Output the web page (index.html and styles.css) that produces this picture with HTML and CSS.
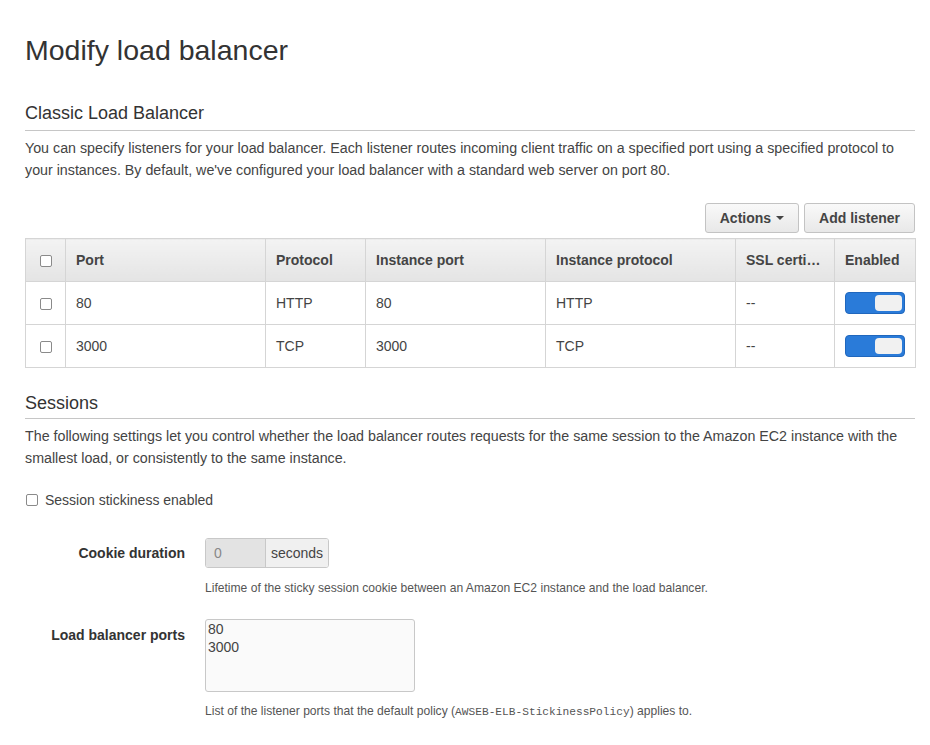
FILE: index.html
```html
<!DOCTYPE html>
<html>
<head>
<meta charset="utf-8">
<link rel="stylesheet" href="styles.css">
</head>
<body>
<div class="page">
  <h1 class="title">Modify load balancer</h1>

  <h2 class="section-title">Classic Load Balancer</h2>
  <p class="desc">You can specify listeners for your load balancer. Each listener routes incoming client traffic on a specified port using a specified protocol to your instances. By default, we've configured your load balancer with a standard web server on port 80.</p>

  <div class="toolbar">
    <button class="btn">Actions <span class="caret"></span></button>
    <button class="btn">Add listener</button>
  </div>

  <table class="grid">
    <colgroup>
      <col class="c-check"><col class="c-port"><col class="c-proto"><col class="c-iport"><col class="c-iproto"><col class="c-ssl"><col class="c-en">
    </colgroup>
    <thead>
      <tr>
        <th class="chk"><span class="cb"></span></th>
        <th>Port</th>
        <th>Protocol</th>
        <th>Instance port</th>
        <th>Instance protocol</th>
        <th>SSL certi…</th>
        <th>Enabled</th>
      </tr>
    </thead>
    <tbody>
      <tr>
        <td class="chk"><span class="cb"></span></td>
        <td>80</td>
        <td>HTTP</td>
        <td>80</td>
        <td>HTTP</td>
        <td>--</td>
        <td><span class="toggle"><span class="knob"></span></span></td>
      </tr>
      <tr>
        <td class="chk"><span class="cb"></span></td>
        <td>3000</td>
        <td>TCP</td>
        <td>3000</td>
        <td>TCP</td>
        <td>--</td>
        <td><span class="toggle"><span class="knob"></span></span></td>
      </tr>
    </tbody>
  </table>

  <h2 class="section-title sessions">Sessions</h2>
  <p class="desc">The following settings let you control whether the load balancer routes requests for the same session to the Amazon EC2 instance with the smallest load, or consistently to the same instance.</p>

  <label class="check-line"><span class="cb"></span>Session stickiness enabled</label>

  <div class="form-row cookie-row">
    <div class="label">Cookie duration</div>
    <div class="field">
      <div class="input-group">
        <span class="input">0</span><span class="addon">seconds</span>
      </div>
      <div class="help">Lifetime of the sticky session cookie between an Amazon EC2 instance and the load balancer.</div>
    </div>
  </div>

  <div class="form-row ports-row">
    <div class="label">Load balancer ports</div>
    <div class="field">
      <div class="textarea">80<br>3000</div>
      <div class="help">List of the listener ports that the default policy (<code>AWSEB-ELB-StickinessPolicy</code>) applies to.</div>
    </div>
  </div>
</div>
</body>
</html>
```

FILE: styles.css
```css
* { box-sizing: border-box; }
html, body { margin: 0; padding: 0; background: #fff; }
body {
  font-family: "Liberation Sans", Arial, sans-serif;
  color: #444;
  font-size: 14px;
}
.page { padding: 0 15px 0 25px; width: 930px; }

.title {
  margin: 0;
  padding-top: 33px;
  font-size: 28.5px;
  font-weight: normal;
  color: #333;
  line-height: 34px;
}

.section-title {
  margin: 35px 0 0 0;
  font-size: 18px;
  font-weight: normal;
  color: #333;
  line-height: 22px;
  padding-bottom: 6px;
  border-bottom: 1px solid #c6c6c6;
}
.section-title.sessions { margin-top: 24px; padding-bottom: 4px; }

.desc {
  margin: 6px 0 0 0;
  line-height: 22px;
  font-size: 14.25px;
  color: #444;
}

.toolbar {
  display: flex;
  justify-content: flex-end;
  gap: 5px;
  margin-top: 22px;
}
.btn {
  font-family: "Liberation Sans", Arial, sans-serif;
  font-size: 14px;
  font-weight: bold;
  color: #444;
  height: 30px;
  padding: 0 14px;
  border: 1px solid #c3c3c3;
  border-radius: 3px;
  background: linear-gradient(#f9f9f9, #e8e8e8);
  display: flex;
  align-items: center;
  gap: 5px;
}
.caret {
  display: inline-block;
  width: 0; height: 0;
  border-left: 4px solid transparent;
  border-right: 4px solid transparent;
  border-top: 4px solid #444;
}

.grid {
  margin-top: 5px;
  width: 890px;
  border-collapse: collapse;
  table-layout: fixed;
}
.c-check { width: 40px; }
.c-port { width: 200px; }
.c-proto { width: 100px; }
.c-iport { width: 180px; }
.c-iproto { width: 190px; }
.c-ssl { width: 99px; }
.c-en { width: 81px; }

.grid th, .grid td {
  border: 1px solid #d5d5d5;
  text-align: left;
  padding: 0 10px;
  white-space: nowrap;
  overflow: hidden;
}
.grid th {
  height: 43px;
  font-weight: bold;
  color: #444;
  background: linear-gradient(#f3f3f3, #e4e4e4);
}
.grid td { height: 43px; color: #444; }
.grid .chk { padding: 0; text-align: center; }

.cb {
  display: inline-block;
  width: 12px; height: 12px;
  border: 1px solid #8a8a8a;
  border-radius: 2px;
  background: #fff;
  vertical-align: middle;
}

.toggle {
  width: 60px;
  height: 22px;
  border-radius: 4px;
  background: #2a7bd9;
  border: 1px solid #2067bd;
  padding: 2px;
  display: flex;
  justify-content: flex-end;
}
.knob {
  width: 27px;
  height: 16px;
  border-radius: 4px;
  background: #f1f1f1;
}

.check-line {
  display: flex;
  align-items: center;
  gap: 7px;
  margin-top: 21px;
  line-height: 20px;
}
.check-line .cb { margin-left: 1px; }

.form-row { display: flex; }
.form-row .label {
  width: 160px;
  text-align: right;
  font-weight: bold;
  color: #333;
  margin-right: 20px;
}
.cookie-row { margin-top: 28px; }
.cookie-row .label { padding-top: 7px; }
.ports-row { margin-top: 23px; }
.ports-row .label { padding-top: 8px; }

.input-group {
  display: flex;
  height: 30px;
  width: 124px;
  border: 1px solid #c8c8c8;
  border-radius: 3px;
  overflow: hidden;
}
.input {
  width: 60px;
  background: #e3e3e3;
  color: #888;
  padding: 0 0 0 8px;
  line-height: 28px;
  border-right: 1px solid #c8c8c8;
}
.addon {
  flex: 1;
  background: #f0f0f0;
  color: #444;
  line-height: 28px;
  text-align: center;
}

.help {
  font-size: 12.1px;
  color: #555;
  margin-top: 12px;
  line-height: 16px;
}
.help code {
  font-family: "Liberation Mono", "Courier New", monospace;
  font-size: 11.2px;
}

.textarea {
  width: 210px;
  height: 73px;
  border: 1px solid #c8c8c8;
  border-radius: 3px;
  background: #fafafa;
  padding: 0 2px;
  line-height: 18px;
  color: #444;
}
.ports-row .help { margin-top: 11px; }
```
